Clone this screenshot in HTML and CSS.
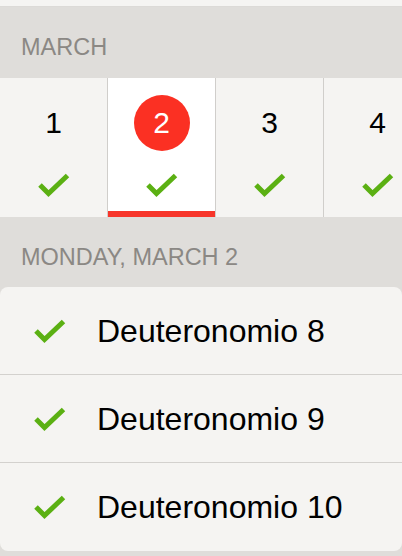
FILE: index.html
```html
<!doctype html>
<html lang="en">
<head>
    <meta charset="UTF-8">
    <meta name="viewport" content="width=device-width, initial-scale=1.0">
    <title>Reading plan</title>
    <link rel="stylesheet" href="styles.css">
</head>
<body>
    <div class="top-card"></div>

    <div class="section-header">March</div>

    <div class="days">
        <div class="day">
            <div class="day-num">1</div>
            <svg class="check" viewBox="0 0 32 24"><polyline points="2,12 10.5,20.5 29.5,2.5"/></svg>
        </div>
        <div class="day selected">
            <div class="day-num">2</div>
            <svg class="check" viewBox="0 0 32 24"><polyline points="2,12 10.5,20.5 29.5,2.5"/></svg>
        </div>
        <div class="day">
            <div class="day-num">3</div>
            <svg class="check" viewBox="0 0 32 24"><polyline points="2,12 10.5,20.5 29.5,2.5"/></svg>
        </div>
        <div class="day">
            <div class="day-num">4</div>
            <svg class="check" viewBox="0 0 32 24"><polyline points="2,12 10.5,20.5 29.5,2.5"/></svg>
        </div>
    </div>

    <div class="section-header">Monday, March 2</div>

    <div class="readings">
        <div class="reading">
            <svg class="check" viewBox="0 0 32 24"><polyline points="2,12 10.5,20.5 29.5,2.5"/></svg>
            <span class="reading-title">Deuteronomio 8</span>
        </div>
        <div class="reading">
            <svg class="check" viewBox="0 0 32 24"><polyline points="2,12 10.5,20.5 29.5,2.5"/></svg>
            <span class="reading-title">Deuteronomio 9</span>
        </div>
        <div class="reading">
            <svg class="check" viewBox="0 0 32 24"><polyline points="2,12 10.5,20.5 29.5,2.5"/></svg>
            <span class="reading-title">Deuteronomio 10</span>
        </div>
    </div>
</body>
</html>
```

FILE: styles.css
```css
body {
    margin: 0;
    width: 402px;
    height: 556px;
    overflow: hidden;
    background-color: #dfddda;
    font-family: "Liberation Sans", Arial, sans-serif;
    color: #000000;
}

.top-card {
    height: 7px;
    background-color: #f5f4f2;
    border-bottom: 1px solid #dcdad7;
    box-sizing: border-box;
}

.section-header {
    height: 71px;
    box-sizing: border-box;
    padding: 29px 0 0 21px;
    font-size: 23.5px;
    line-height: 23px;
    text-transform: uppercase;
    color: #8b8884;
}

.section-header + .readings {
    margin-top: -1px;
}

.days {
    display: flex;
    height: 139px;
    background-color: #f5f4f2;
    overflow: hidden;
}

.day {
    flex: 0 0 108px;
    box-sizing: border-box;
    border-right: 1px solid #d0cecb;
    display: flex;
    flex-direction: column;
    align-items: center;
    padding-top: 17px;
}

.day.selected {
    background-color: #ffffff;
    box-shadow: inset 0 -6px 0 #f7352a;
}

.day-num {
    width: 56px;
    height: 56px;
    border-radius: 50%;
    display: flex;
    align-items: center;
    justify-content: center;
    font-size: 30px;
    line-height: 30px;
}

.day.selected .day-num {
    background-color: #fb3023;
    color: #ffffff;
}

.day .check {
    margin-top: 22px;
}

.check {
    width: 32px;
    height: 24px;
    flex: none;
}

.check polyline {
    fill: none;
    stroke: #5bb013;
    stroke-width: 5;
}

.readings {
    background-color: #f5f4f2;
    border-radius: 8px;
    height: 264px;
}

.reading {
    display: flex;
    align-items: center;
    gap: 31px;
    height: 87px;
    padding-left: 34px;
}

.reading + .reading {
    border-top: 1px solid #d3d1ce;
}

.reading-title {
    font-size: 32px;
    line-height: 32px;
}
```
